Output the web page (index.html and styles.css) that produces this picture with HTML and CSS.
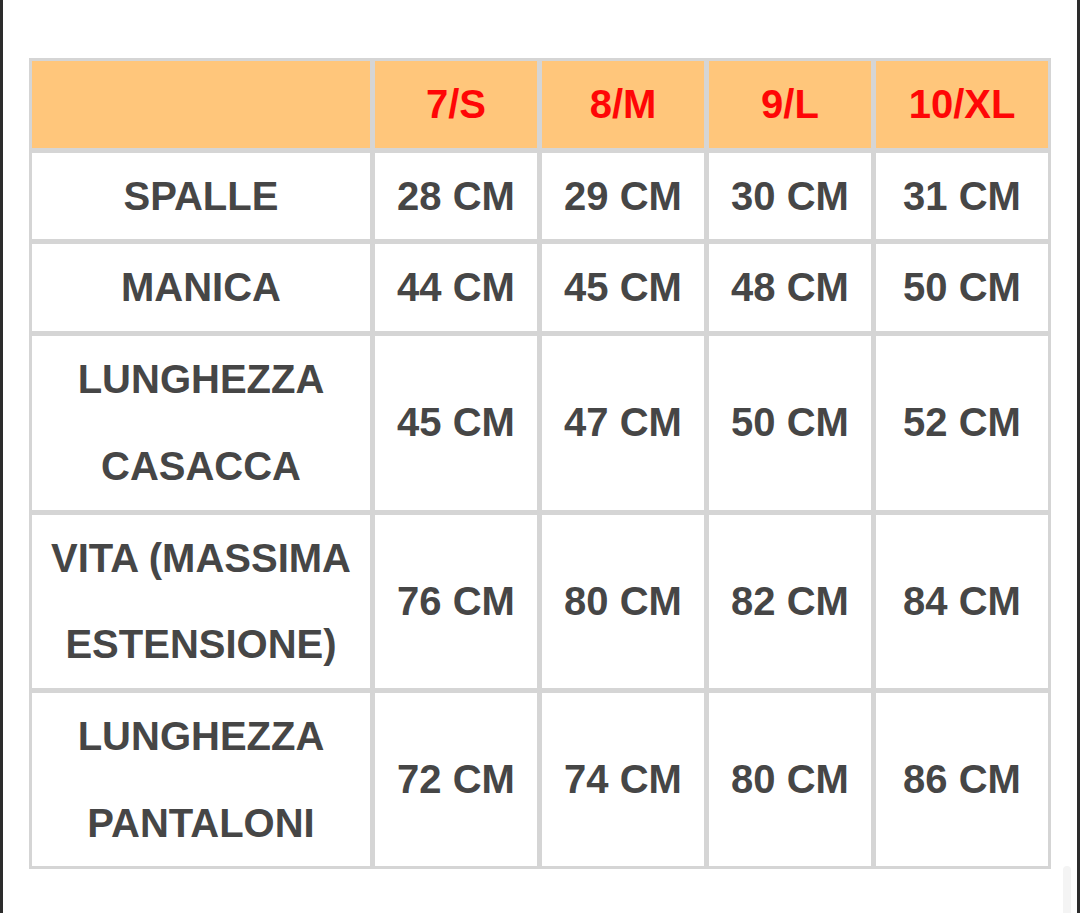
FILE: index.html
```html
<!DOCTYPE html>
<html lang="it">
<head>
<meta charset="utf-8">
<title>Tabella taglie</title>
<link rel="stylesheet" href="styles.css">
</head>
<body>
<div class="frame">
  <table class="sizes">
    <thead>
      <tr>
        <th class="label"></th>
        <th class="c1">7/S</th>
        <th class="c2">8/M</th>
        <th class="c3">9/L</th>
        <th class="c4">10/XL</th>
      </tr>
    </thead>
    <tbody>
      <tr>
        <td class="label">SPALLE</td>
        <td>28 CM</td><td>29 CM</td><td>30 CM</td><td>31 CM</td>
      </tr>
      <tr>
        <td class="label">MANICA</td>
        <td>44 CM</td><td>45 CM</td><td>48 CM</td><td>50 CM</td>
      </tr>
      <tr>
        <td class="label">LUNGHEZZA<br>CASACCA</td>
        <td>45 CM</td><td>47 CM</td><td>50 CM</td><td>52 CM</td>
      </tr>
      <tr>
        <td class="label">VITA (MASSIMA<br>ESTENSIONE)</td>
        <td>76 CM</td><td>80 CM</td><td>82 CM</td><td>84 CM</td>
      </tr>
      <tr class="last">
        <td class="label">LUNGHEZZA<br>PANTALONI</td>
        <td>72 CM</td><td>74 CM</td><td>80 CM</td><td>86 CM</td>
      </tr>
    </tbody>
  </table>
  <div class="scroll-thumb"></div>
</div>
</body>
</html>
```
FILE: styles.css
```css
html, body {
  margin: 0;
  padding: 0;
  background: #ffffff;
}

.frame {
  position: relative;
  box-sizing: border-box;
  width: 1080px;
  height: 913px;
  border-left: 3px solid #2c2c2c;
  border-right: 3px solid #2c2c2c;
  padding-top: 58px;
  padding-left: 26px;
  overflow: hidden;
}

.sizes {
  border-collapse: separate;
  border-spacing: 0;
  border-top: 3px solid #d5d5d5;
  border-left: 3px solid #d5d5d5;
  font-family: "Liberation Sans", Arial, Helvetica, sans-serif;
  font-weight: bold;
  font-size: 40px;
  line-height: 86.7px;
  color: #464646;
  table-layout: fixed;
}

.sizes th,
.sizes td {
  padding: 0;
  text-align: center;
  vertical-align: middle;
  border-right: 5px solid #d5d5d5;
  border-bottom: 5px solid #d5d5d5;
  white-space: nowrap;
}

.sizes th:last-child,
.sizes td:last-child {
  border-right-width: 3px;
}

.sizes tr.last td {
  border-bottom-width: 3px;
}

.sizes thead th {
  background: #ffc67b;
  color: #ff0606;
}

.sizes .label {
  width: 338px;
}

.sizes .c1,
.sizes .c2,
.sizes .c3 {
  width: 162px;
}

.sizes .c4 {
  width: 172px;
}

.scroll-thumb {
  position: absolute;
  left: 1060px;
  top: 866px;
  width: 8px;
  height: 60px;
  border-radius: 4px;
  background: #f4f4f4;
}
```
